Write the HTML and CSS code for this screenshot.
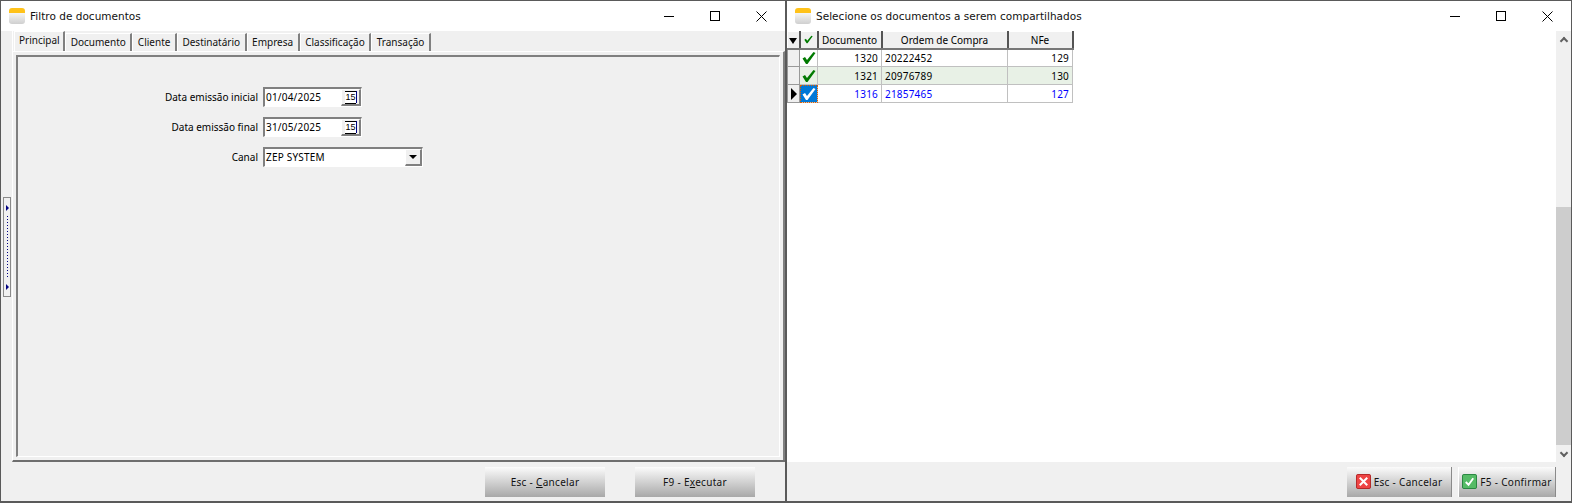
FILE: index.html
```html
<!DOCTYPE html>
<html lang="en">
<head>
  <meta charset="UTF-8">
  <title>Filtro de documentos</title>
  <link rel="stylesheet" href="styles.css">
</head>
<body>

<svg class="defs" width="0" height="0">
  <symbol id="check" viewBox="0 0 14 14">
    <path d="M0.5 7.5 L3 6 L5 9 L11.5 1 L13.5 2 L5.5 13 L4 13 Z" fill="currentColor"/>
  </symbol>
  <symbol id="min" viewBox="0 0 11 11"><path d="M0 5.5H10" stroke="#000" fill="none"/></symbol>
  <symbol id="max" viewBox="0 0 11 11"><rect x="0.5" y="0.5" width="9" height="9" stroke="#000" fill="none"/></symbol>
  <symbol id="close" viewBox="0 0 11 11"><path d="M0.5 0.5L10.5 10.5M10.5 0.5L0.5 10.5" stroke="#000" fill="none"/></symbol>
</svg>

<div class="desktop">

  <!-- left window -->
  <div class="window">
    <div class="titlebar">
      <span class="app-icon"></span>
      <span class="title">Filtro de documentos</span>
      <div class="controls">
        <svg><use href="#min"/></svg>
        <svg><use href="#max"/></svg>
        <svg><use href="#close"/></svg>
      </div>
    </div>

    <div class="content">
      <div class="side">
        <div class="splitter">
          <span class="arrow"></span>
          <span class="dots"></span>
          <span class="arrow"></span>
        </div>
      </div>

      <div class="tabarea">
        <div class="tabs">
          <span class="tab active">Principal</span>
          <span class="tab">Documento</span>
          <span class="tab">Cliente</span>
          <span class="tab">Destinatário</span>
          <span class="tab">Empresa</span>
          <span class="tab">Classificação</span>
          <span class="tab">Transação</span>
        </div>
        <div class="page">
          <div class="form">
            <label>Data emissão inicial</label>
            <div class="field date">
              <span class="value">01/04/2025</span>
              <span class="cal-btn"><span class="cal">15</span></span>
            </div>
            <label>Data emissão final</label>
            <div class="field date">
              <span class="value">31/05/2025</span>
              <span class="cal-btn"><span class="cal">15</span></span>
            </div>
            <label>Canal</label>
            <div class="field combo">
              <span class="value">ZEP SYSTEM</span>
              <span class="drop-btn"><span class="tri"></span></span>
            </div>
          </div>
        </div>
      </div>
    </div>

    <div class="footer left-footer">
      <span class="btn wide"><span>Esc - <u>C</u>ancelar</span></span>
      <span class="btn wide"><span>F9 - E<u>x</u>ecutar</span></span>
    </div>
  </div>

  <!-- right window -->
  <div class="window">
    <div class="titlebar">
      <span class="app-icon"></span>
      <span class="title">Selecione os documentos a serem compartilhados</span>
      <div class="controls">
        <svg><use href="#min"/></svg>
        <svg><use href="#max"/></svg>
        <svg><use href="#close"/></svg>
      </div>
    </div>

    <div class="grid-area">
      <div class="grid-wrap">
        <table class="grid">
          <colgroup>
            <col class="c-ind"><col class="c-chk"><col class="c-doc"><col class="c-ord"><col class="c-nfe">
          </colgroup>
          <tr class="head">
            <th class="ind"><span class="tri"></span></th>
            <th><svg class="mini-check"><use href="#check"/></svg></th>
            <th>Documento</th>
            <th>Ordem de Compra</th>
            <th>NFe</th>
          </tr>
          <tr>
            <td class="ind"></td>
            <td class="chk"><svg class="check"><use href="#check"/></svg></td>
            <td class="num">1320</td>
            <td>20222452</td>
            <td class="num">129</td>
          </tr>
          <tr class="alt">
            <td class="ind"></td>
            <td class="chk"><svg class="check"><use href="#check"/></svg></td>
            <td class="num">1321</td>
            <td>20976789</td>
            <td class="num">130</td>
          </tr>
          <tr class="current">
            <td class="ind"><span class="pointer"></span></td>
            <td class="chk focus"><svg class="check"><use href="#check"/></svg></td>
            <td class="num">1316</td>
            <td>21857465</td>
            <td class="num">127</td>
          </tr>
        </table>
      </div>

      <div class="scrollbar">
        <span class="sb-btn"><span class="chev up"></span></span>
        <span class="sb-track"></span>
        <span class="sb-thumb"></span>
        <span class="sb-btn"><span class="chev down"></span></span>
      </div>
    </div>

    <div class="footer right-footer">
      <span class="btn cancel">
        <svg class="btn-icon" viewBox="0 0 16 16">
          <rect x="0.5" y="0.5" width="15" height="15" rx="1.5" fill="#ee4444" stroke="#b02020"/>
          <path d="M4 4L12 12M12 4L4 12" stroke="#fff" stroke-width="2.2"/>
        </svg>
        <span>Esc - Cancelar</span>
      </span>
      <span class="btn confirm">
        <svg class="btn-icon" viewBox="0 0 16 16">
          <rect x="0.5" y="0.5" width="15" height="15" rx="1.5" fill="#55bb66" stroke="#20803a"/>
          <path d="M4 8.5L7 11.5L12 4.5" fill="none" stroke="#fff" stroke-width="2"/>
        </svg>
        <span>F5 - Confirmar</span>
      </span>
    </div>
  </div>

</div>

</body>
</html>
```

FILE: styles.css
```css
* {
  box-sizing: border-box;
}

html, body {
  margin: 0;
  height: 100%;
  overflow: hidden;
}

body {
  font-family: "Noto Sans", sans-serif;
  font-size: 10px;
  color: #000;
  background: #666;
}

.defs {
  position: absolute;
}

.desktop {
  display: flex;
  height: 503px;
}

.window {
  width: 786px;
  height: 503px;
  display: flex;
  flex-direction: column;
  background: #f0f0f0;
  border: 1px solid #5a5a5a;
  border-bottom-width: 2px;
}

.titlebar {
  height: 30px;
  flex: none;
  display: flex;
  align-items: center;
  padding-left: 8px;
  background: #fff;
}

.app-icon {
  width: 16px;
  height: 16px;
  margin-right: 5px;
  border-radius: 3px;
  background: linear-gradient(to bottom, #ffc21a 0, #ffc21a 5px, #f6f6f6 5px, #cfcfcf 100%);
}

.title {
  font-family: "DejaVu Sans", sans-serif;
  font-size: 10.5px;
  letter-spacing: 0.02px;
  color: #111;
}

.controls {
  margin-left: auto;
  display: flex;
  padding-right: 18px;
  gap: 35px;
}

.controls svg {
  width: 11px;
  height: 11px;
}

.content {
  flex: 1;
  display: flex;
  min-height: 0;
}

.side {
  width: 11px;
  flex: none;
  display: flex;
  align-items: center;
  padding-left: 2px;
}

.splitter {
  width: 8px;
  height: 100px;
  display: flex;
  flex-direction: column;
  align-items: center;
  justify-content: space-between;
  padding: 7px 0 6px;
  border: 1px solid #8a8a8a;
}

.splitter .arrow {
  width: 0;
  height: 0;
  border-left: 3px solid #000080;
  border-top: 3px solid transparent;
  border-bottom: 3px solid transparent;
}

.splitter .dots {
  flex: 1;
  width: 1px;
  margin: 5px 0;
  background: repeating-linear-gradient(to bottom, #000080 0, #000080 1px, transparent 1px, transparent 3px);
}

.tabarea {
  flex: 1;
  display: flex;
  flex-direction: column;
  border-left: 1px solid #fff;
  border-bottom: 2px solid #6e6e6e;
}

.tabs {
  height: 20px;
  flex: none;
  display: flex;
  align-items: flex-end;
  padding-left: 1px;
}

.tab {
  height: 18px;
  padding: 1px 4.5px 0 4.5px;
  color: #111;
  border-top: 1px solid #fff;
  border-left: 1px solid #fff;
  border-right: 2px solid #808080;
  background: #f0f0f0;
}

.tab.active {
  height: 20px;
  padding: 1px 3.5px 0 4px;
}

.page {
  flex: 1;
  padding: 3px;
  border-top: 1px solid #fff;
  border-right: 2px solid #808080;
}

.form {
  height: 100%;
  display: grid;
  grid-template-columns: 240px 160px;
  grid-auto-rows: 20px;
  row-gap: 10px;
  column-gap: 5px;
  align-content: start;
  padding-top: 30px;
  border-top: 2px solid #808080;
  border-left: 2px solid #808080;
  border-right: 1px solid #fff;
  border-bottom: 1px solid #fff;
}

.form label {
  text-align: right;
  align-self: center;
}

.field {
  display: flex;
  align-items: stretch;
  height: 20px;
  background: #fff;
  border-top: 2px solid #808080;
  border-left: 2px solid #808080;
  border-right: 1px solid #fff;
  border-bottom: 1px solid #fff;
}

.field.date {
  width: 99px;
}

.value {
  flex: 1;
  padding-left: 1px;
  line-height: 17px;
  letter-spacing: 0.2px;
}

.cal-btn, .drop-btn {
  display: flex;
  align-items: center;
  justify-content: center;
  background: #f0f0f0;
  border-top: 1px solid #fff;
  border-left: 1px solid #fff;
  border-right: 2px solid #808080;
  border-bottom: 2px solid #808080;
}

.cal-btn {
  width: 20px;
}

.drop-btn {
  width: 17px;
}

.cal {
  width: 11px;
  height: 12px;
  font-family: "Liberation Sans", sans-serif;
  font-size: 9px;
  line-height: 11px;
  text-align: center;
  color: #000;
  background: #fff;
  border-top: 1px solid #000;
  box-shadow: 1px 0 0 #000080, 0 1px 0 #000;
}

.tri {
  width: 0;
  height: 0;
  border-top: 4px solid #000;
  border-left: 4px solid transparent;
  border-right: 4px solid transparent;
}

.footer {
  height: 39px;
  flex: none;
  display: flex;
  align-items: center;
  justify-content: flex-end;
}

.left-footer {
  gap: 30px;
  padding-right: 30px;
}

.right-footer {
  gap: 6px;
  padding-right: 15px;
}

.btn {
  height: 30px;
  display: flex;
  align-items: center;
  justify-content: center;
  gap: 3px;
  color: #111;
  letter-spacing: 0.3px;
  background: linear-gradient(to bottom, #fbfbfb, #a8a8a8);
}

.btn.wide {
  width: 120px;
}

.btn.cancel {
  width: 105px;
  border-right: 1px solid #8a8a8a;
}

.btn.confirm {
  width: 98px;
  border-right: 1px solid #8a8a8a;
  border-left: 1px solid #fff;
}

.btn-icon {
  width: 15px;
  height: 15px;
}

.grid-area {
  flex: 1;
  min-height: 0;
  display: flex;
  background: #fff;
}

.grid-wrap {
  flex: 1;
}

.grid {
  border-collapse: collapse;
  table-layout: fixed;
  width: 285px;
}

.c-ind { width: 12px; }
.c-chk { width: 18px; }
.c-doc { width: 64px; }
.c-ord { width: 126px; }
.c-nfe { width: 65px; }

.grid tr {
  height: 18px;
}

.grid tr.head {
  height: 17px;
}

.grid th {
  padding: 0;
  font-weight: normal;
  background: #f0f0f0;
  border-top: 1px solid #fff;
  border-left: 1px solid #fff;
  border-right: 2px solid #555;
  border-bottom: 2px solid #777;
}

.grid td {
  padding: 0 3px;
  border: 1px solid #c0c0c0;
  letter-spacing: 0.2px;
  white-space: nowrap;
  overflow: hidden;
}

.grid .num {
  text-align: right;
}

.grid td.ind {
  padding: 0;
  background: #f0f0f0;
  border: 1px solid #999;
}

.grid th.ind .tri {
  display: inline-block;
  vertical-align: middle;
  border-top-width: 6px;
}

.pointer {
  display: block;
  width: 0;
  height: 0;
  margin-left: 3px;
  border-left: 6px solid #000;
  border-top: 6px solid transparent;
  border-bottom: 6px solid transparent;
}

.alt td:not(.ind) {
  background: #e8f1e6;
}

.current td {
  color: #0000ff;
}

.grid td.chk {
  padding: 0;
  text-align: center;
  color: #007a00;
}

.grid td.focus {
  color: #fff;
  background: #0078d7;
  outline: 1px dotted #e06000;
  outline-offset: -1px;
}

.check {
  display: block;
  width: 14px;
  height: 14px;
  margin: 0 auto;
}

.mini-check {
  display: block;
  width: 9px;
  height: 9px;
  margin: 0 auto;
  color: #007a00;
}

.scrollbar {
  width: 15px;
  flex: none;
  display: flex;
  flex-direction: column;
  background: #f0f0f0;
}

.sb-btn {
  height: 17px;
  flex: none;
  display: flex;
  align-items: center;
  justify-content: center;
}

.sb-track {
  flex: 1;
}

.sb-thumb {
  height: 238px;
  flex: none;
  background: #cdcdcd;
}

.chev {
  width: 6px;
  height: 6px;
  border-top: 2px solid #606060;
  border-left: 2px solid #606060;
}

.chev.up {
  transform: translateY(1px) rotate(45deg);
}

.chev.down {
  transform: translateY(-1px) rotate(225deg);
}
```
